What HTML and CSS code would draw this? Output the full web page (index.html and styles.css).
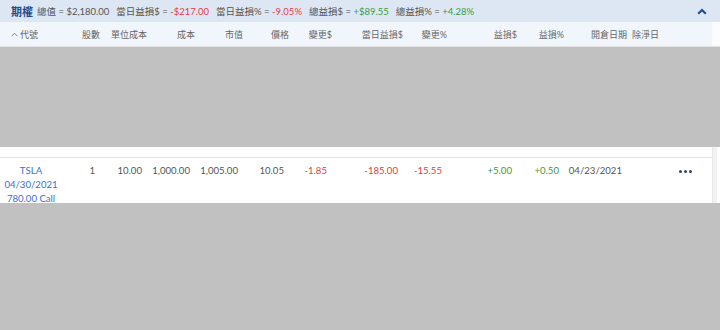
FILE: index.html
```html
<!DOCTYPE html>
<html lang="zh-Hant">
<head>
<meta charset="utf-8">
<link rel="stylesheet" href="styles.css">
</head>
<body>
<div class="panel">
  <div class="titlebar">
    <span class="title">期權</span>
    <span class="item">總值 = <span class="val">$2,180.00</span></span>
    <span class="item">當日益損$ = <span class="neg">-$217.00</span></span>
    <span class="item">當日益損% = <span class="neg">-9.05%</span></span>
    <span class="item">總益損$ = <span class="pos">+$89.55</span></span>
    <span class="item">總益損% = <span class="pos">+4.28%</span></span>
    <svg class="collapse" width="10" height="7" viewBox="0 0 10 7"><polyline points="1.2,5.8 5,2 8.8,5.8" fill="none" stroke="#1f4f8f" stroke-width="2.2"/></svg>
  </div>
  <div class="section">
    <div class="main thead grid">
      <div class="hc first"><svg class="sort" width="7" height="5" viewBox="0 0 7 5"><polyline points="0.5,4.3 3.5,1.2 6.5,4.3" fill="none" stroke="#8a8a8a" stroke-width="1"/></svg>代號</div>
      <div class="hc">股數</div>
      <div class="hc">單位成本</div>
      <div class="hc">成本</div>
      <div class="hc">市值</div>
      <div class="hc">價格</div>
      <div class="hc">變更$</div>
      <div class="hc">當日益損$</div>
      <div class="hc">變更%</div>
      <div class="hc">益損$</div>
      <div class="hc">益損%</div>
      <div class="hc">開倉日期</div>
      <div class="hc">除淨日</div>
      <div class="hc"></div>
    </div>
    <div class="strip strip-head"></div>
  </div>
  <div class="mask mask-top"></div>
  <div class="section">
    <div class="main">
      <div class="spacer"></div>
      <div class="row grid">
        <div class="dc code"><span class="link">TSLA<br>04/30/2021 780.00 Call</span></div>
        <div class="dc">1</div>
        <div class="dc">10.00</div>
        <div class="dc">1,000.00</div>
        <div class="dc">1,005.00</div>
        <div class="dc">10.05</div>
        <div class="dc neg">-1.85</div>
        <div class="dc neg">-185.00</div>
        <div class="dc neg">-15.55</div>
        <div class="dc pos">+5.00</div>
        <div class="dc pos">+0.50</div>
        <div class="dc">04/23/2021</div>
        <div class="dc"></div>
        <div class="dc actions"><span class="dot"></span><span class="dot"></span><span class="dot"></span></div>
      </div>
    </div>
    <div class="strip strip-body"></div>
  </div>
  <div class="mask mask-bottom"></div>
</div>
</body>
</html>
```

FILE: styles.css
```css
html, body {
  margin: 0;
  padding: 0;
  background: #ffffff;
}

body {
  font-family: Lato, "Noto Sans CJK TC", sans-serif;
  color: #555555;
  width: 720px;
  height: 330px;
  overflow: hidden;
}

.panel {
  display: flex;
  flex-direction: column;
  width: 720px;
  height: 330px;
}

.titlebar {
  height: 22px;
  background: #dde7f4;
  display: flex;
  align-items: center;
  padding-left: 11px;
  padding-right: 13px;
  gap: 7px;
  font-size: 9.5px;
  white-space: nowrap;
}

.title {
  font-size: 11px;
  font-weight: bold;
  color: #1f4f8f;
  margin-right: -3px;
}

.item {
  color: #555555;
}

.val {
  color: #555555;
}

.neg {
  color: #ea3a3f;
}

.pos {
  color: #3c9a3c;
}

.collapse {
  margin-left: auto;
  display: block;
}

.section {
  display: flex;
}

.main {
  width: 712px;
  flex: none;
}

.strip {
  flex: 1;
}

.strip-head {
  background: #fbfcfe;
  border-bottom: 1px solid #e2e2e2;
}

.strip-body {
  border-left: 1px solid #e8e8e8;
  background: linear-gradient(to right, #f2f2f2 0, #f2f2f2 4px, #ffffff 4px);
}

.grid {
  display: grid;
  grid-template-columns: 62px 38px 47px 48px 48px 46px 43px 71px 44px 70px 47px 63px 32px 53px;
}

.thead {
  height: 24px;
  background: #f1f5fc;
  border-bottom: 1px solid #e2e2e2;
  align-items: center;
  font-size: 9px;
  color: #666666;
}

.hc {
  text-align: right;
  white-space: nowrap;
}

.hc.first {
  text-align: left;
  padding-left: 11px;
  display: flex;
  align-items: center;
  gap: 2px;
}

.sort {
  display: block;
}

.mask {
  background: #c1c1c1;
}

.mask-top {
  height: 100px;
}

.mask-bottom {
  flex: 1;
}

.spacer {
  height: 10px;
}

.row {
  height: 46px;
  border-top: 1px solid #e0e0e0;
  box-sizing: border-box;
  padding-top: 6px;
  font-size: 9.6px;
  line-height: 14px;
  overflow: hidden;
}

.dc {
  text-align: right;
  padding-right: 5px;
  white-space: nowrap;
}

.dc.code {
  text-align: center;
  white-space: normal;
  padding: 0 4px;
}

.link {
  color: #3a71cc;
}

.actions {
  display: flex;
  justify-content: center;
  align-items: center;
  gap: 2px;
  height: 14px;
  padding-right: 0;
  padding-left: 0;
}

.dot {
  width: 3px;
  height: 3px;
  border-radius: 50%;
  background: #2f4463;
  display: block;
}
```
